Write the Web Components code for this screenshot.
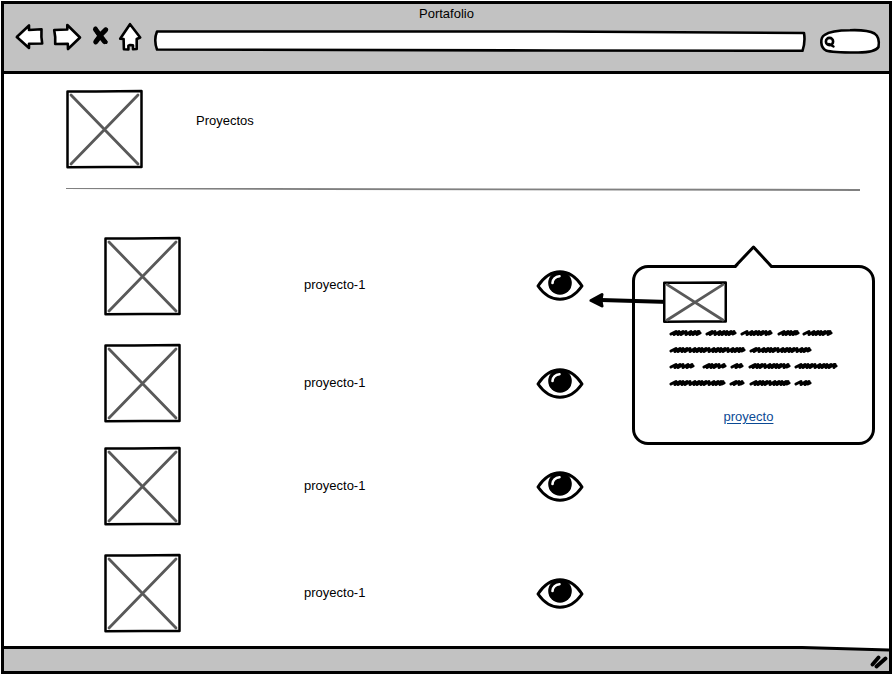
<!DOCTYPE html>
<html lang="es">
<head>
<meta charset="utf-8">
<title>Portafolio</title>
<style>
  body { margin: 0; background: #fff; color: #000; font: 13px/16px "Liberation Sans", Arial, sans-serif; }
</style>
</head>
<body>
<portfolio-page></portfolio-page>

<script>
const define = (name, html, setup) => {
  const template = document.createElement('template');
  template.innerHTML = html;
  customElements.define(name, class extends HTMLElement {
    constructor() {
      super();
      this.attachShadow({ mode: 'open' }).append(template.content.cloneNode(true));
    }
    connectedCallback() { if (setup) setup(this, this.shadowRoot); }
  });
};

/* Crossed-box picture placeholder; stretches to the size of its host. */
define('image-box', `
<style>
  :host { display: block; width: 77px; height: 78px; }
  svg { display: block; width: 100%; height: 100%; overflow: visible; }
  path { fill: none; vector-effect: non-scaling-stroke; stroke-linecap: round; stroke-linejoin: round; }
  .frame { fill: #fff; }
</style>
<svg viewBox="0 0 77 78" preserveAspectRatio="none" role="img" aria-label="Imagen">
  <path class="frame" d="M1.500 1.5L30 1.5L75.500 1V77L40 77L1.500 77.300Z" stroke="#000" stroke-width="2.500"/>
  <path d="M5 5L72 74M72 5L5 74" stroke="#595959" stroke-width="2.800"/>
</svg>`);

define('eye-button', `
<style>
  :host { display: block; }
  button { display: block; padding: 0; border: 0; background: none; cursor: pointer; }
  svg { display: block; }
</style>
<button type="button" aria-label="Ver proyecto">
  <svg width="48" height="32" viewBox="0 0 48 32">
    <path d="M2 17C9 6.500 16 2.800 24 2.800S39 6.500 46 17C39 27 32 30.300 24 30.300S9 27 2 17Z" fill="#fff" stroke="#000" stroke-width="3" stroke-linejoin="round"/>
    <circle cx="24" cy="14" r="11.8"/>
    <path d="M16.500 14C16.500 10.500 19.500 7.500 23.500 7.200" fill="none" stroke="#fff" stroke-width="2.6" stroke-linecap="round"/>
  </svg>
</button>`);

define('browser-bar', `
<style>
  :host { display: block; background: #c2c2c2; border-bottom: 3px solid #000; padding: 2px 11px 17px; }
  .title { text-align: center; }
  .tools { display: flex; align-items: flex-start; margin: 1px -2px 0 0; }
  button { display: block; padding: 0; border: 0; background: none; cursor: pointer; }
  button + button { margin-left: 10px; }
  svg { display: block; overflow: visible; }
  svg path, svg circle { stroke: #000; stroke-linejoin: round; stroke-linecap: round; }
  .field { display: grid; flex: 1; height: 22px; margin: 7px 16px 0 14px; }
  .search { display: grid; width: 60px; height: 26px; margin-top: 5px; }
  .field > *, .search > * { grid-area: 1 / 1; min-width: 0; width: 100%; height: 100%; box-sizing: border-box; }
  .field path { vector-effect: non-scaling-stroke; }
  input { border: 0; background: none; font: inherit; padding: 0 8px; outline: none; }
  .search input { padding: 0 8px 0 18px; }
</style>
<div class="title">Portafolio</div>
<div class="tools">
  <button type="button" aria-label="Atrás"><svg width="28" height="28" viewBox="0 0 28 28"><path d="M1.8 14L14 2.500V7L26.500 6.200Q26 14 27.200 20.5L14 20.8V25Z" fill="#fff" stroke-width="2.600"/></svg></button>
  <button type="button" aria-label="Adelante"><svg width="28" height="28" viewBox="0 0 28 28"><path d="M1.2 7L14.3 6.500V2L27 14.500L15 26L14.8 20.700L2.2 21V14Z" fill="#fff" stroke-width="2.600"/></svg></button>
  <button type="button" aria-label="Detener"><svg width="18" height="28" viewBox="0 0 18 28"><path d="M4.500 5.500C6.500 11 10 15.500 14.800 19M15.200 6.500C11 11 7.500 14 4.500 19.500" fill="none" stroke-width="4"/><path d="M4.500 6.500L8 11L13.500 18.500M14.500 7L10.500 11L5 18.500" fill="none" stroke-width="5"/></svg></button>
  <button type="button" aria-label="Inicio"><svg width="22" height="28" viewBox="0 0 22 28"><path d="M11 1.2L21.200 14.500L17.7 16V26L14 26.200V22.3L11.2 22L9.400 22.8V26.5L4.9 26.3L4.600 16L1.200 15.800Z" fill="#fff" stroke-width="2.600"/></svg></button>
  <div class="field">
    <svg viewBox="0 0 650 22" preserveAspectRatio="none" aria-hidden="true"><path d="M2 1.5L400 1.5L650 3Q651.5 12 648.5 20.8L400 20.5L2 19.5Q-1.5 10 2 1.5Z" fill="#fff" stroke-width="2.600"/></svg>
    <input type="text" aria-label="Dirección">
  </div>
  <div class="search">
    <svg viewBox="0 0 60 26" preserveAspectRatio="none" aria-hidden="true">
      <path d="M30 2.2C41 1.8 50 3 54.5 5.5C59 8.500 59.500 13 58.500 19C56 23 46 24.700 36 24.500C26 24.500 12 24.500 6 22.500C0 19 0 10 4.500 7C10 3 20 2.200 30 2.200Z" fill="#fff" stroke-width="2.600"/>
      <circle cx="9.500" cy="13.500" r="3.600" fill="none" stroke-width="2.600"/>
      <path d="M9 16L13.500 18.500" fill="none" stroke-width="2.500"/>
    </svg>
    <input type="text" aria-label="Buscar">
  </div>
</div>`);

define('status-bar', `
<style>
  :host { display: grid; height: 25px; }
  svg { grid-area: 1 / 1; display: block; width: 100%; height: 25px; }
  .line { vector-effect: non-scaling-stroke; }
  .grip { width: 18px; justify-self: end; margin-right: 1px; }
</style>
<svg viewBox="0 0 887 25" preserveAspectRatio="none" aria-hidden="true">
  <path d="M0 1.500H800L887 4V25H0Z" fill="#c2c2c2"/>
  <path class="line" d="M0 1.500H800L887 4" fill="none" stroke="#000" stroke-width="2.800"/>
</svg>
<svg class="grip" viewBox="0 0 18 25" aria-hidden="true">
  <path d="M2.500 18.500L8.500 11.500M6.500 20.500L15.500 12.500" stroke="#000" stroke-width="3.800" stroke-linecap="round"/>
</svg>`);

/* Handwritten filler lines: each pair is the start and the end of one word. */
const SCRIBBLE = [
  [5, [[1, 32], [37, 67], [72, 103], [109, 130], [134, 163]]],
  [22, [[1, 76], [81, 142]]],
  [38, [[1, 25], [34, 57], [62, 74], [80, 121], [126, 168]]],
  [55, [[1, 56], [61, 75], [81, 121], [126, 142]]]
];

define('scribble-text', `
<style>
  :host { display: block; }
  svg { display: block; overflow: visible; }
  path { fill: none; stroke: #000; stroke-width: 3; stroke-linecap: round; stroke-linejoin: round; }
</style>
<svg width="170" height="60" viewBox="0 0 170 60" aria-hidden="true"><path/></svg>`,
(host, root) => {
  let d = '', n = 0;
  for (const [y, words] of SCRIBBLE) {
    for (const [from, to] of words) {
      let x = from + 1;
      d += `M${x} ${y + 1}`;
      while (x < to - 7) {
        const step = [3, 4, 3, 5, 4][n++ % 5];
        d += `L${x + 5} ${y - 1.5}L${x + step} ${y + 1.5}`;
        x += step;
      }
      d += `L${to - 2} ${y - 1.5}L${to - 3} ${y + 1}L${to - 1} ${y}`;
    }
  }
  root.querySelector('path').setAttribute('d', d);
});

define('project-callout', `
<style>
  :host { display: block; position: relative; box-sizing: border-box; border: 3px solid #000; border-radius: 16px; padding: 14px 28px 18px; background: #fff; }
  .tip { position: absolute; left: 50%; top: -23px; margin-left: -20px; overflow: visible; }
  .arrow { position: absolute; right: 100%; top: 24px; margin-right: -34px; }
  image-box { width: 64px; height: 40px; position: relative; }
  scribble-text { margin: 6px 0 0 6px; }
  p { margin: 21px 0 -1px; padding-right: 10px; text-align: center; }
  a { color: #0b4a94; text-decoration: underline; text-underline-offset: 2px; }
</style>
<svg class="tip" width="40" height="24" viewBox="0 0 40 24" aria-hidden="true">
  <path d="M1 24L20 3L38 24Z" fill="#fff"/>
  <path d="M1 21.500L19.500 2L37.500 21.500" fill="none" stroke="#000" stroke-width="3" stroke-linejoin="round" stroke-linecap="round"/>
</svg>
<svg class="arrow" width="80" height="18" viewBox="0 0 80 18" aria-hidden="true">
  <path d="M12 8L80 10" stroke="#000" stroke-width="4"/>
  <path d="M2 8.500L13 2.500Q11.500 9 13 14Z" stroke="#000" stroke-width="3" stroke-linejoin="round"/>
</svg>
<image-box></image-box>
<scribble-text></scribble-text>
<p><a href="#proyecto">proyecto</a></p>`);

define('project-row', `
<style>
  :host { display: grid; grid-template-columns: 200fr 232fr 48px; align-items: center; }
  :host([lowered]) .name, :host([lowered]) eye-button { padding-top: 18px; }
</style>
<image-box></image-box>
<span class="name"><slot></slot></span>
<eye-button></eye-button>`);

define('portfolio-page', `
<style>
  :host { display: flex; flex-direction: column; box-sizing: border-box; min-height: calc(100vh - 2px); margin: 1px; border: 3px solid #000; }
  main { flex: 1; padding: 16px 14px 13px 62px; }
  header { display: flex; gap: 53px; }
  h1 { margin: 23px 0 0; font: inherit; }
  .rule { display: block; width: calc(100% - 15px); height: 4px; margin-top: 19px; }
  .content { display: grid; grid-template-columns: 480fr 243fr; align-items: start; gap: 48px; margin: 46px 0 0 38px; }
  ul { display: grid; gap: 25px; margin: 0; padding: 0; list-style: none; }
  li:nth-child(odd):not(:last-child) { margin-bottom: 4px; }
  project-callout { margin-top: 28px; }
</style>
<browser-bar></browser-bar>
<main>
  <header><image-box></image-box><h1>Proyectos</h1></header>
  <svg class="rule" viewBox="0 0 794 4" preserveAspectRatio="none" aria-hidden="true">
    <path d="M0 1L200 1L794 2V4L250 3L0 2Z" fill="#808080"/>
  </svg>
  <div class="content">
    <ul>
      <li><project-row lowered>proyecto-1</project-row></li>
      <li><project-row>proyecto-1</project-row></li>
      <li><project-row>proyecto-1</project-row></li>
      <li><project-row>proyecto-1</project-row></li>
    </ul>
    <project-callout></project-callout>
  </div>
</main>
<status-bar></status-bar>`);
</script>
</body>
</html>
